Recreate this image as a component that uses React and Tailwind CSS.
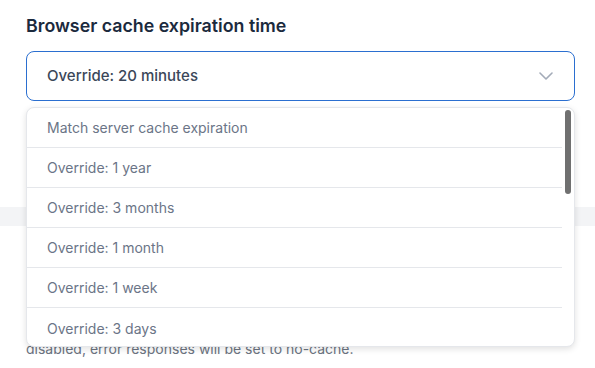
import React from "react";

const items = [
  "Match server cache expiration",
  "Override: 1 year",
  "Override: 3 months",
  "Override: 1 month",
  "Override: 1 week",
  "Override: 3 days",
];

export default function App() {
  return (
    <div
      className="relative w-[595px] h-[368px] overflow-hidden bg-white"
      style={{ fontFamily: "Inter, 'Noto Sans', sans-serif" }}
    >
      <div className="pl-[26px] pr-[20px] pt-[14px]">
        <h2 className="text-[17.8px] leading-[24px] font-semibold text-[#1b2a3d]">
          Browser cache expiration time
        </h2>
        <div className="mt-[13px] h-[50px] rounded-lg border border-[#2b6fd0] flex items-center justify-between pl-[20px] pr-[20px]">
          <span className="text-[15px] font-medium text-[#3b4759]">Override: 20 minutes</span>
          <svg width="14" height="8" viewBox="0 0 14 8" fill="none" className="mr-[1px]">
            <path d="M1 1l6 6 6-6" stroke="#a3abb8" strokeWidth="1.6" strokeLinecap="round" strokeLinejoin="round" />
          </svg>
        </div>
      </div>
      <div className="mt-[106px] h-[19px] bg-[#f3f4f6]" />
      <div className="px-[26px] pt-[112px]">
        <p className="text-[14px] leading-[22px] text-[#6b7380]">
          disabled, error responses will be set to no-cache.
        </p>
      </div>

      <div className="absolute left-[26px] top-[107px] w-[549px] h-[240px] rounded-lg border border-[#e5e7eb] bg-white shadow-[0_2px_6px_rgba(0,0,0,0.12)] flex overflow-hidden">
        <ul className="flex-1">
          {items.map((t, i) => (
            <li
              key={t}
              className={`h-[40px] flex items-center pl-[20px] text-[14px] text-[#6b7587] ${i < items.length - 1 ? "border-b border-[#e5e7eb]" : ""}`}
            >
              {t}
            </li>
          ))}
        </ul>
        <div className="w-[12px] pt-[2px] flex justify-center">
          <div className="w-[6px] h-[84px] rounded-full bg-[#707070]" />
        </div>
      </div>
    </div>
  );
}
